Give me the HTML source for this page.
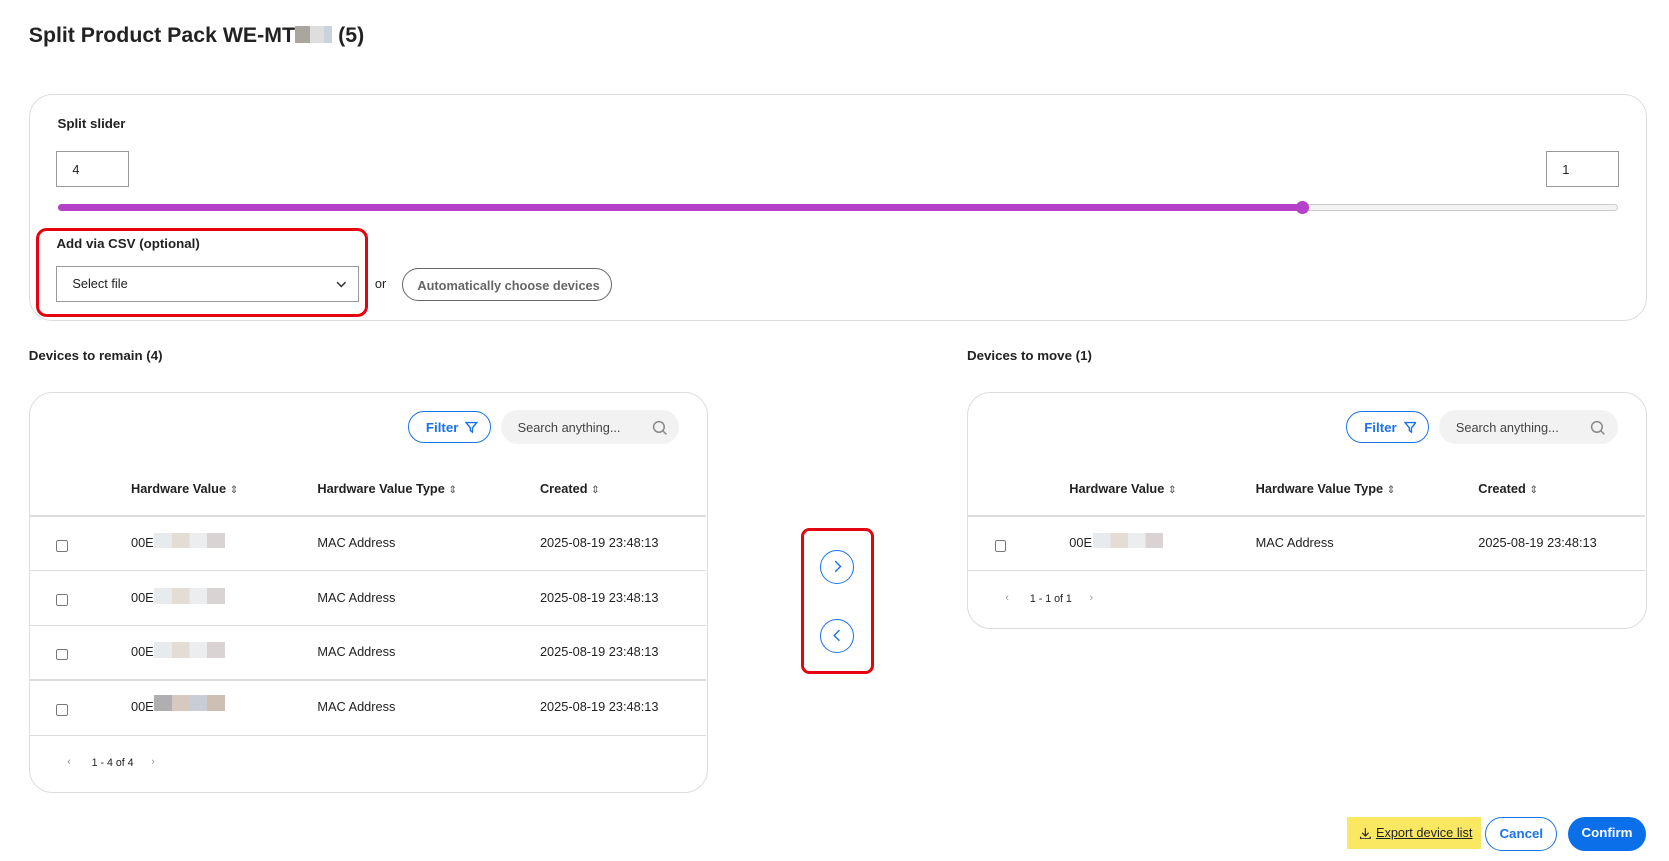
<!DOCTYPE html>
<html><head><meta charset="utf-8"><style>
html,body{margin:0;padding:0;background:#fff;width:1669px;height:861px;overflow:hidden}
#w{zoom:1.065;position:relative;width:1567px;height:808px;font-family:"Liberation Sans",Arial,sans-serif;color:#222}
.a{position:absolute}
.card{position:absolute;border:1px solid #ddd;border-radius:22px;background:#fff}
.b{font-weight:bold}
.t{font-size:12px}
.hl{position:absolute;height:1px;background:#ddd}
.cb{position:absolute;width:9px;height:9px;border:1px solid #777;border-radius:2px}
.blur{position:absolute;height:15px;width:66px;background:linear-gradient(90deg,#e8ebee 0 25%,#e3ddd6 25% 50%,#ebedee 50% 75%,#d9d4d3 75%)}
.filter{position:absolute;width:78px;height:30px;border:1px solid #1a73e8;border-radius:16px;color:#1a73e8;font-size:12.5px;font-weight:bold;box-sizing:border-box;padding:7px 0 0 16px}
.search{position:absolute;width:168px;height:32px;background:#f2f2f2;border-radius:16px;font-size:12px;color:#444;box-sizing:border-box;padding:9px 0 0 16px}
.circ{position:absolute;width:32px;height:32px;border:1.5px solid #1a73e8;border-radius:50%;box-sizing:border-box}
.s{font-size:10px;color:#555;font-weight:normal}
</style></head><body><div id="w">
<div class="a b" style="left:27px;top:22px;font-size:20px">Split Product Pack WE-MT<span style="display:inline-block;width:14px;height:16px;background:#aaa59f;vertical-align:-1px"></span><span style="display:inline-block;width:13px;height:16px;background:#dedede;vertical-align:-1px"></span><span style="display:inline-block;width:8px;height:16px;background:#c9d3dd;vertical-align:-1px"></span> (5)</div>

<div class="card" style="left:27px;top:88px;width:1518px;height:212px"></div>
<div class="a b" style="left:54px;top:109px;font-size:12.5px">Split slider</div>
<div class="a t" style="left:53px;top:142px;width:68px;height:34px;border:1px solid #999;box-sizing:border-box;padding:9px 0 0 14px">4</div>
<div class="a t" style="left:1452px;top:142px;width:68px;height:34px;border:1px solid #999;box-sizing:border-box;padding:9px 0 0 14px">1</div>
<div class="a" style="left:54px;top:192px;width:1465px;height:6px;border:1px solid #ccc;border-radius:4px;box-sizing:border-box;background:#f3f3f3"></div>
<div class="a" style="left:54px;top:192px;width:1170px;height:6px;border-radius:4px;background:#b541c8"></div>
<div class="a" style="left:1217px;top:189px;width:12px;height:12px;border-radius:50%;background:#b541c8"></div>

<div class="a" style="left:34px;top:214px;width:306px;height:78px;border:3.5px solid #e3040f;border-radius:10px"></div>
<div class="a b" style="left:53px;top:222px;font-size:12.5px">Add via CSV (optional)</div>
<div class="a t" style="left:53px;top:250px;width:284px;height:34px;border:1px solid #999;box-sizing:border-box;padding:8px 0 0 14px">Select file<svg class="a" style="left:262px;top:12px" width="10" height="8" viewBox="0 0 10 8"><path d="M1 2l4 4 4-4" fill="none" stroke="#333" stroke-width="1.4"/></svg></div>
<div class="a t" style="left:352px;top:259px">or</div>
<div class="a b" style="left:377px;top:252px;width:198px;height:31px;border:1px solid #666;border-radius:16px;box-sizing:border-box;font-size:12px;color:#666;padding:8px 0 0 14px">Automatically choose devices</div>

<div class="a b" style="left:27px;top:327px;font-size:12.5px">Devices to remain (4)</div>
<div class="a b" style="left:908px;top:327px;font-size:12.5px">Devices to move (1)</div>

<div class="card" style="left:27px;top:368px;width:636px;height:375px"></div>
<div class="filter" style="left:383px;top:386px">Filter <svg style="vertical-align:-2px;margin-left:3px" width="12" height="12" viewBox="0 0 12 12"><path d="M1 1.5h10L7 6.5v4L5 9V6.5z" fill="none" stroke="#1a73e8" stroke-width="1.3"/></svg></div>
<div class="search" style="left:470px;top:385px">Search anything...<svg class="a" style="left:142px;top:9px" width="15" height="15" viewBox="0 0 15 15"><circle cx="6.5" cy="6.5" r="5" fill="none" stroke="#888" stroke-width="1.4"/><path d="M10 10l3.5 3.5" stroke="#888" stroke-width="1.4"/></svg></div>
<div class="a b t" style="left:123px;top:452px">Hardware Value <span class="s">⇕</span></div>
<div class="a b t" style="left:298px;top:452px">Hardware Value Type <span class="s">⇕</span></div>
<div class="a b t" style="left:507px;top:452px">Created <span class="s">⇕</span></div>
<div class="hl" style="left:28px;top:484px;width:635px"></div>
<div class="hl" style="left:28px;top:535px;width:635px"></div>
<div class="hl" style="left:28px;top:587px;width:635px"></div>
<div class="hl" style="left:28px;top:638px;width:635px"></div>
<div class="hl" style="left:28px;top:690px;width:635px"></div>

<div class="cb" style="left:53px;top:507px"></div><div class="a t" style="left:123px;top:502px">00E</div><div class="blur" style="left:145px;top:500px"></div><div class="a t" style="left:298px;top:502px">MAC Address</div><div class="a t" style="left:507px;top:502px">2025-08-19 23:48:13</div>
<div class="cb" style="left:53px;top:558px"></div><div class="a t" style="left:123px;top:554px">00E</div><div class="blur" style="left:145px;top:552px"></div><div class="a t" style="left:298px;top:554px">MAC Address</div><div class="a t" style="left:507px;top:554px">2025-08-19 23:48:13</div>
<div class="cb" style="left:53px;top:609px"></div><div class="a t" style="left:123px;top:605px">00E</div><div class="blur" style="left:145px;top:603px"></div><div class="a t" style="left:298px;top:605px">MAC Address</div><div class="a t" style="left:507px;top:605px">2025-08-19 23:48:13</div>
<div class="cb" style="left:53px;top:661px"></div><div class="a t" style="left:123px;top:656px">00E</div><div class="blur" style="left:145px;top:653px;background:linear-gradient(90deg,#b0aeb0 0 25%,#d6c9c0 25% 50%,#c8cdd6 50% 75%,#cdbfb4 75%)"></div><div class="a t" style="left:298px;top:656px">MAC Address</div><div class="a t" style="left:507px;top:656px">2025-08-19 23:48:13</div>
<div class="a" style="left:63px;top:710px;font-size:10px;color:#999">‹</div>
<div class="a" style="left:86px;top:711px;font-size:10px">1 - 4 of 4</div>
<div class="a" style="left:142px;top:710px;font-size:10px;color:#999">›</div>

<div class="a" style="left:752px;top:496px;width:63px;height:131px;border:3.5px solid #e3040f;border-radius:8px"></div>
<div class="circ" style="left:770px;top:516px"><svg class="a" style="left:10px;top:8px" width="10" height="14" viewBox="0 0 10 14"><path d="M3 2l5 5-5 5" fill="none" stroke="#1a73e8" stroke-width="1.3"/></svg></div>
<div class="circ" style="left:770px;top:581px"><svg class="a" style="left:10px;top:8px" width="10" height="14" viewBox="0 0 10 14"><path d="M7 2L2 7l5 5" fill="none" stroke="#1a73e8" stroke-width="1.3"/></svg></div>

<div class="card" style="left:908px;top:368px;width:637px;height:221px"></div>
<div class="filter" style="left:1264px;top:386px">Filter <svg style="vertical-align:-2px;margin-left:3px" width="12" height="12" viewBox="0 0 12 12"><path d="M1 1.5h10L7 6.5v4L5 9V6.5z" fill="none" stroke="#1a73e8" stroke-width="1.3"/></svg></div>
<div class="search" style="left:1351px;top:385px">Search anything...<svg class="a" style="left:142px;top:9px" width="15" height="15" viewBox="0 0 15 15"><circle cx="6.5" cy="6.5" r="5" fill="none" stroke="#888" stroke-width="1.4"/><path d="M10 10l3.5 3.5" stroke="#888" stroke-width="1.4"/></svg></div>
<div class="a b t" style="left:1004px;top:452px">Hardware Value <span class="s">⇕</span></div>
<div class="a b t" style="left:1179px;top:452px">Hardware Value Type <span class="s">⇕</span></div>
<div class="a b t" style="left:1388px;top:452px">Created <span class="s">⇕</span></div>
<div class="hl" style="left:909px;top:484px;width:636px"></div>
<div class="hl" style="left:909px;top:535px;width:636px"></div>
<div class="cb" style="left:934px;top:507px"></div><div class="a t" style="left:1004px;top:502px">00E</div><div class="blur" style="left:1026px;top:500px"></div><div class="a t" style="left:1179px;top:502px">MAC Address</div><div class="a t" style="left:1388px;top:502px">2025-08-19 23:48:13</div>
<div class="a" style="left:944px;top:556px;font-size:10px;color:#999">‹</div>
<div class="a" style="left:967px;top:557px;font-size:10px">1 - 1 of 1</div>
<div class="a" style="left:1023px;top:556px;font-size:10px;color:#999">›</div>

<div class="a" style="left:1265px;top:767px;width:126px;height:30px;background:#fbe862;font-size:12px;box-sizing:border-box;padding:8px 0 0 11px;white-space:nowrap"><svg style="vertical-align:-2px;margin-right:4px" width="12" height="12" viewBox="0 0 12 12"><path d="M6 1v7M3 5.5L6 8.5 9 5.5M1.5 9v2h9V9" fill="none" stroke="#333" stroke-width="1.2"/></svg><span style="text-decoration:underline">Export device list</span></div>
<div class="a b" style="left:1394px;top:767px;width:68px;height:32px;border:1px solid #1a73e8;border-radius:17px;box-sizing:border-box;color:#1a73e8;font-size:12.5px;padding:8px 0 0 13px">Cancel</div>
<div class="a b" style="left:1472px;top:767px;width:74px;height:32px;background:#0a6fe8;border-radius:17px;box-sizing:border-box;color:#fff;font-size:12.5px;padding:8px 0 0 13px">Confirm</div>
</div></body></html>
